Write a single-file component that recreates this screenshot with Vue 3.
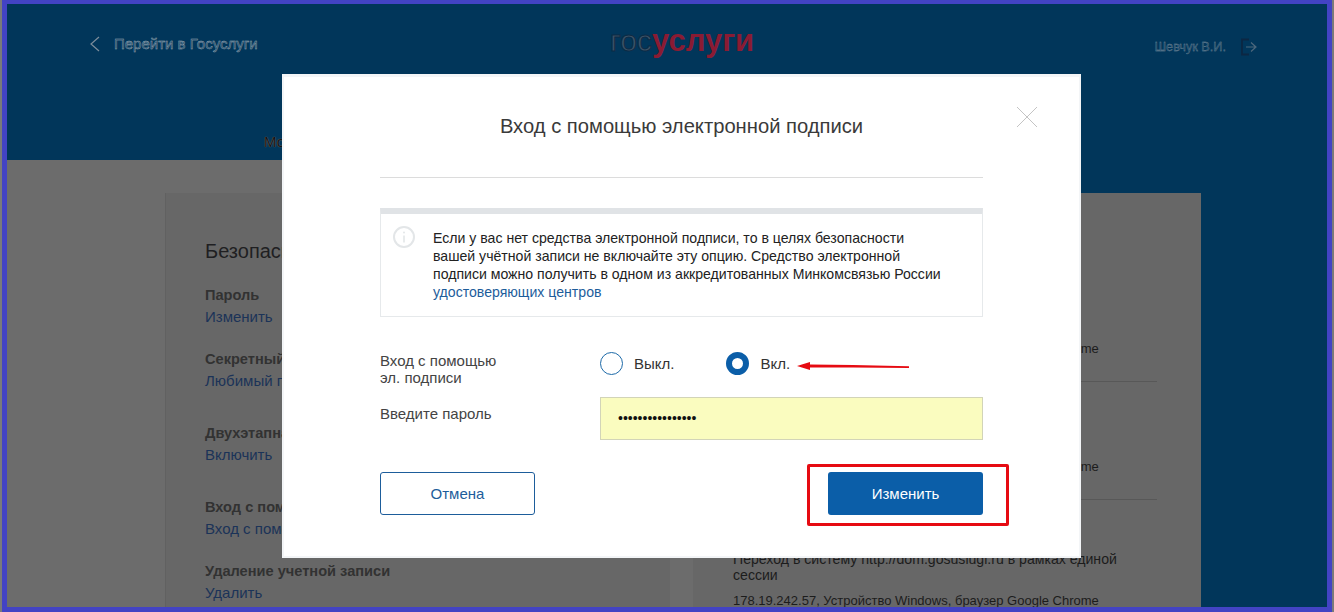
<script setup>
const groups = [
  { name: 'Пароль', link: 'Изменить', cls: 'near' },
  { name: 'Секретный вопрос', link: 'Любимый предмет', cls: 'far' },
  { name: 'Двухэтапная аутентификация', link: 'Включить', cls: 'far' },
  { name: 'Вход с помощью электронной подписи', link: 'Вход с помощью эл. подписи', cls: 'near' },
  { name: 'Удаление учетной записи', link: 'Удалить', cls: 'near' }
]
const device = '178.19.242.57, Устройство Windows, браузер Google Chrome'
</script>

<template>
  <div class="page">
    <div class="frame">
      <header class="header">
        <div class="top">
          <a class="back">
            <svg width="14" height="16" viewBox="0 0 14 16"><path d="M11 1 3 8l8 7" fill="none" stroke="#7d8d9b" stroke-width="1.2"/></svg>
            <span class="ghost">Перейти в Госуслуги</span>
          </a>
          <div class="logo"><span class="gos">гос</span><span class="usl">услуги</span></div>
          <div class="user">
            <span class="ghost dim">Шевчук В.И.</span>
            <svg width="20" height="18" viewBox="0 0 20 18"><path d="M9 1.5H2v15h7" fill="none" stroke="#0c2743" stroke-width="1.8"/><path d="M11 4.5l5 4.5-5 4.5M6 9h9" fill="none" stroke="#4d687d" stroke-width="1.2"/></svg>
          </div>
        </div>
        <nav class="nav"><span class="nav-item">Мои данные</span></nav>
      </header>
      <main class="main">
        <div class="col-left">
          <section class="card-left">
            <h2 class="sec-title">Безопасность</h2>
            <div v-for="g in groups" :key="g.name" class="group" :class="g.cls">
              <div class="g-name">{{ g.name }}</div>
              <a class="g-link">{{ g.link }}</a>
            </div>
          </section>
        </div>
        <div class="col-right">
          <section class="card-right">
            <div class="row"><div class="ip">{{ device }}</div></div>
            <div class="row"><div class="ip">{{ device }}</div></div>
            <div class="row last">
              <div class="act">Переход в систему http://dom.gosuslugi.ru в рамках единой сессии</div>
              <div class="ip">{{ device }}</div>
            </div>
          </section>
        </div>
      </main>
    </div>

    <div class="modal">
      <div class="m-head">
        <h1 class="m-title">Вход с помощью электронной подписи</h1>
        <svg class="close" width="22" height="22" viewBox="0 0 22 22"><path d="M1 1l20 20M21 1 1 21" stroke="#c4c4c4" stroke-width="1" fill="none"/></svg>
      </div>
      <div class="info">
        <svg class="i-ico" width="24" height="24" viewBox="0 0 24 24">
          <circle cx="12" cy="12" r="10" fill="none" stroke="#e3e6e8" stroke-width="2"/>
          <path d="M12 10.5v7" stroke="#e3e6e8" stroke-width="1.6"/>
          <circle cx="12" cy="7.5" r="1" fill="#e3e6e8"/>
        </svg>
        <p class="i-text">Если у вас нет средства электронной подписи, то в целях безопасности<br>вашей учётной записи не включайте эту опцию. Средство электронной<br>подписи можно получить в одном из аккредитованных Минкомсвязью России<br><a class="i-link">удостоверяющих центров</a></p>
      </div>
      <div class="f-row first">
        <div class="f-label">Вход с помощью<br>эл. подписи</div>
        <div class="radios">
          <span class="radio"></span><span class="r-text off">Выкл.</span>
          <span class="radio on"></span><span class="r-text">Вкл.</span>
        </div>
      </div>
      <div class="f-row pass">
        <div class="f-label">Введите пароль</div>
        <div class="input">••••••••••••••••</div>
      </div>
      <div class="btns">
        <button class="btn ghost-btn">Отмена</button>
        <button class="btn primary">Изменить</button>
      </div>
    </div>

    <div class="mark-box"></div>
    <svg class="mark-arrow" width="120" height="16" viewBox="0 0 120 16">
      <path d="M4 8 17 4 17 6.5 60 7 116 8.2 116 10 60 9.6 17 9.5 17 12Z" fill="#e60b12"/>
    </svg>
  </div>
</template>

<style>
html, body { margin: 0; background: #7a7a7a; }
</style>

<style scoped>
* { box-sizing: border-box; }
.page {
  position: relative;
  width: 1334px;
  height: 612px;
  padding: 0 2px;
  overflow: hidden;
  font-family: "Liberation Sans", Arial, sans-serif;
  font-size: 14px;
  background: #7a7a7a;
}
.frame {
  width: 1330px;
  height: 612px;
  border: 5px solid #4343c4;
  border-top-width: 4px;
  display: flex;
  flex-direction: column;
  background: #01365a;
}
.header { height: 156px; flex: none; background: #01365a; }
.top {
  height: 80px;
  display: flex;
  align-items: center;
  padding: 0 67px 0 81px;
}
.back { display: flex; align-items: center; gap: 12px; width: 522px; flex: none; }
.ghost {
  color: #1a4666;
  -webkit-text-stroke: 0.4px #a0adb8;
  font-size: 15px;
  line-height: 16px;
}
.dim { -webkit-text-stroke: 0.3px #7d909f; font-size: 12.7px; }
.logo { margin-bottom: 6px; font-weight: 700; font-size: 31px; line-height: 32px; display: flex; }
.gos { color: #3c5468; -webkit-text-stroke: 1px #0e2a44; font-weight: 400; font-size: 30px; }
.usl { color: #8a1b33; }
.user { display: flex; align-items: center; gap: 14px; margin: 6px 0 0 auto; }
.nav { padding: 50px 0 0 257px; }
.nav-item {
  color: #141414;
  font-size: 15px;
  line-height: 16px;
  display: block;
  text-shadow: 0 0 1px #a08878;
}
.main { flex: 1; display: flex; min-height: 0; overflow: hidden; }
.col-left { width: 675px; flex: none; background: #6c6c6c; padding: 33px 0 0 158px; }
.col-right { flex: none; width: 519px; padding-top: 33px; background: linear-gradient(#01365a 33px, #6c6c6c 33px); }
.card-left {
  width: 505px;
  height: 500px;
  background: #676767;
  border-left: 1px solid #616161;
  padding: 46px 0 0 39px;
}
.sec-title { margin: 0 0 24px; font-size: 20px; font-weight: 400; line-height: 24px; color: #1f1f22; white-space: nowrap; }
.group { white-space: nowrap; }
.near { margin-bottom: 26px; }
.far { margin-bottom: 36px; }
.g-name { font-weight: 700; font-size: 14.6px; line-height: 16px; color: #323232; margin-bottom: 6px; }
.g-link { display: block; font-size: 15px; line-height: 16px; color: #1b3358; }
.card-right {
  margin-left: 11px;
  width: 508px;
  height: 500px;
  background: #676767;
  padding: 71px 44px 0 40px;
}
.row { padding: 77px 0 24px; border-bottom: 1px solid #585858; }
.row.last { padding-top: 51px; border-bottom: 0; }
.act { font-size: 14.1px; line-height: 16px; color: #1c1c1c; margin-bottom: 10px; }
.ip { font-size: 13px; line-height: 16px; color: #1c1c1c; white-space: nowrap; }

.modal {
  position: absolute;
  left: 282px;
  top: 74px;
  width: 799px;
  height: 484px;
  background: #fff;
  border: 2px solid #f3f5f7;
  border-top-width: 3px;
  padding: 0 96px;
}
.m-head {
  position: relative;
  height: 101px;
  border-bottom: 1px solid #dcdcdc;
  padding-top: 37px;
  margin-bottom: 30px;
}
.m-title { margin: 0; text-align: center; font-size: 20.2px; font-weight: 400; line-height: 24px; color: #3a3a3a; white-space: nowrap; }
.close { position: absolute; right: -55px; top: 29px; }
.info {
  height: 109px;
  border: 1px solid #e6e9eb;
  border-top: 6px solid #e0e3e6;
  display: flex;
  padding: 12px 0 0 11px;
  gap: 17px;
}
.i-ico { flex: none; margin-top: -1px; }
.i-text { margin: 0; padding-top: 3px; font-size: 14.1px; line-height: 18px; color: #222; white-space: nowrap; }
.i-link { color: #1d5d9b; }
.f-row { display: flex; }
.first { margin-top: 35px; }
.f-label { width: 220px; font-size: 15px; line-height: 17px; color: #444; flex: none; }
.radios { display: flex; align-items: center; height: 24px; margin-top: -1px; }
.radio {
  width: 23px; height: 23px; border-radius: 50%;
  border: 1.5px solid #1d6aa8; background: #fff; flex: none;
}
.radio.on { border: 6px solid #0b5ea8; }
.r-text { color: #333; font-size: 15px; margin: 2px 0 0 11px; line-height: 16px; }
.r-text.off { margin-right: 52px; }
.pass { margin-top: 11px; }
.pass .f-label { padding-top: 8px; }
.input {
  width: 384px;
  height: 43px;
  background: #fafcbf;
  border: 1px solid #d2d4b8;
  padding-left: 17px;
  line-height: 41px;
  color: #111;
  font-size: 14px;
}
.btns { display: flex; justify-content: space-between; margin-top: 32px; }
.btn { width: 155px; height: 43px; border-radius: 3px; font-family: inherit; font-size: 15px; padding: 0; }
.ghost-btn { background: #fff; border: 1px solid #1d5d9b; color: #1d5d9b; }
.primary { background: #0b5ea8; border: 0; color: #fff; }
.mark-box {
  position: absolute;
  left: 807px;
  top: 464px;
  width: 202px;
  height: 62px;
  border: 3px solid #e60b12;
  border-radius: 2px;
}
.mark-arrow { position: absolute; left: 793px; top: 358px; }
</style>
